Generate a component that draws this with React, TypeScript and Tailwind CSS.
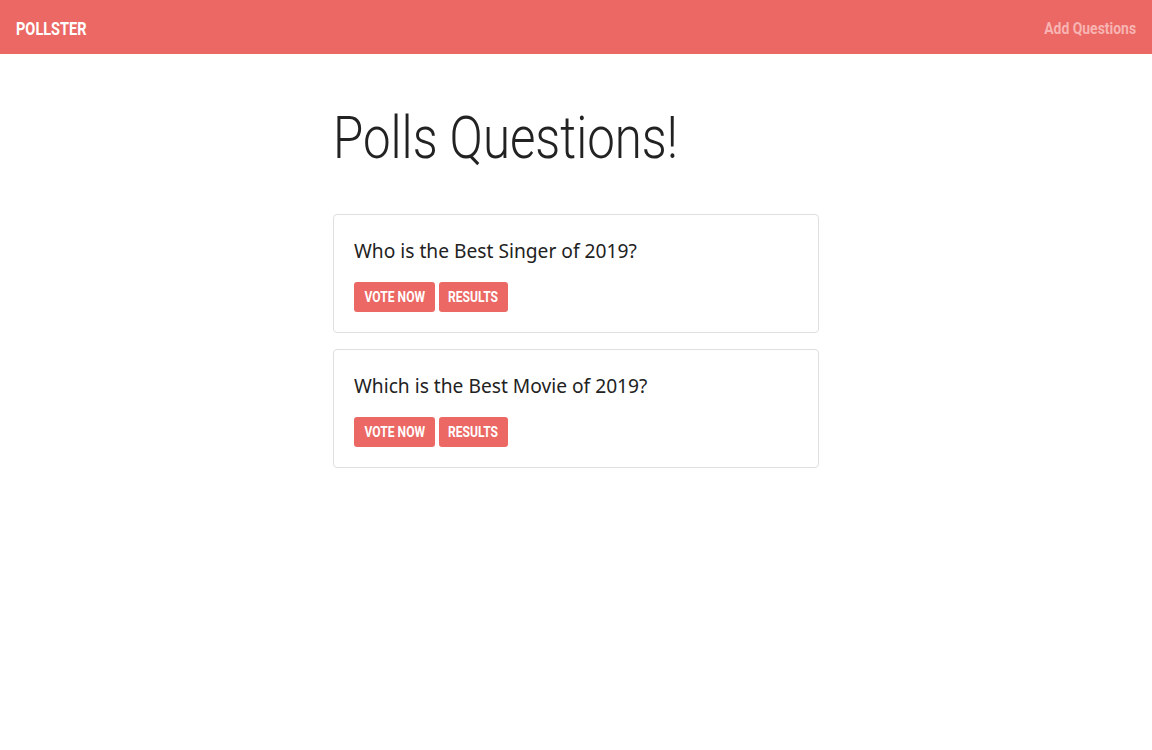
import React from "react";

const cond = { fontFamily: 'Roboto, "Liberation Sans", sans-serif' };

function Btn({ label, w }: { label: string; w: string }) {
  return (
    <button className={`h-[30px] ${w} rounded-[3px] bg-[#eb6864] text-white text-[15.5px] font-bold uppercase flex items-center justify-center overflow-hidden`} style={cond}>
      <span className="inline-block whitespace-nowrap scale-x-[0.78] origin-center pt-[1px]">{label}</span>
    </button>
  );
}

function Card({ title }: { title: string }) {
  return (
    <div className="border border-[#dfdfdf] rounded-[4px] px-5 pt-[24px] pb-[20px] bg-white">
      <h5 className="text-[19.2px] leading-[24px] text-[#222] mb-[19px]" style={{ fontFamily: '"Noto Sans", "Open Sans", sans-serif' }}>{title}</h5>
      <div className="flex gap-[4px]">
        <Btn label="Vote Now" w="w-[81px]" />
        <Btn label="Results" w="w-[69px]" />
      </div>
    </div>
  );
}

export default function App() {
  return (
    <div className="min-h-[750px] bg-white">
      <nav className="h-[54px] bg-[#eb6864] flex items-center justify-between px-4">
        <span className="inline-block text-white font-bold text-[17.5px] uppercase scale-x-[0.83] origin-left whitespace-nowrap pt-[5px]" style={cond}>Pollster</span>
        <span className="inline-block text-[#f7b4b2] font-bold text-[17px] pt-[3px] scale-x-[0.82] origin-right whitespace-nowrap" style={cond}>Add Questions</span>
      </nav>
      <div className="w-[486px] mx-auto pt-[48px]">
        <h1 className="text-[60px] leading-[72px] font-light text-[#222] mb-[40px]" style={cond}>
          <span className="inline-block scale-x-[0.82] origin-left whitespace-nowrap">Polls Questions!</span>
        </h1>
        <div className="flex flex-col gap-4">
          <Card title="Who is the Best Singer of 2019?" />
          <Card title="Which is the Best Movie of 2019?" />
        </div>
      </div>
    </div>
  );
}
